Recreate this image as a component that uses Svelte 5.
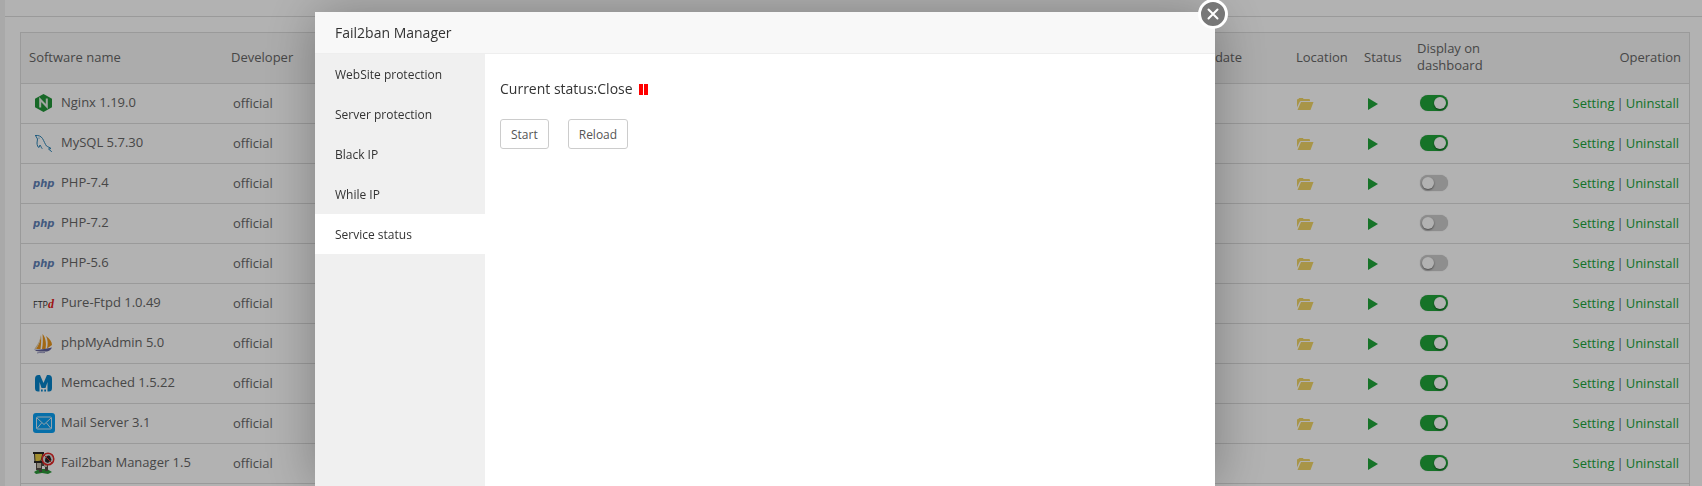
<script lang="ts">
  type Software = { name: string; icon: string; shown: boolean };

  let software: Software[] = $state([
    { name: "Nginx 1.19.0", icon: "nginx", shown: true },
    { name: "MySQL 5.7.30", icon: "mysql", shown: true },
    { name: "PHP-7.4", icon: "php", shown: false },
    { name: "PHP-7.2", icon: "php", shown: false },
    { name: "PHP-5.6", icon: "php", shown: false },
    { name: "Pure-Ftpd 1.0.49", icon: "ftpd", shown: true },
    { name: "phpMyAdmin 5.0", icon: "phpmyadmin", shown: true },
    { name: "Memcached 1.5.22", icon: "memcached", shown: true },
    { name: "Mail Server 3.1", icon: "mail", shown: true },
    { name: "Fail2ban Manager 1.5", icon: "fail2ban", shown: true },
  ]);

  const tabs = ["WebSite protection", "Server protection", "Black IP", "While IP", "Service status"];
  let active = $state("Service status");
</script>

{#snippet logo(icon: string)}
  <svg class="logo" width="22" height="24" viewBox="0 0 22 24" aria-hidden="true">
    {#if icon === "nginx"}
      <path fill="#219639" d="M10.5 3 19 7.700V16.300L10.500 21 2 16.300V7.700z" />
      <path fill="none" stroke="#e4efe6" stroke-width="2" d="M7.200 16.500V8.500L13.800 15.500V7.500" />
    {:else if icon === "mysql"}
      <g fill="none" stroke="#2c83b5" stroke-width="1" stroke-linecap="round" stroke-linejoin="round">
        <path d="M2.500 4.500C5 4 8 5 9.500 7.500C11 10 12 13 13.500 15C15 16 17 16.500 18 17.500L15.500 18L18.500 20.500" />
        <path d="M2.500 4.500L4.500 8L4 12C4 14 5 16.500 6 16.500L7 14C8 15 8 16.500 9 17.500" />
      </g>
      <circle cx="6" cy="7" r="0.600" fill="#2c83b5" />
    {:else if icon === "php"}
      <text class="php" x="0" y="16">php</text>
    {:else if icon === "ftpd"}
      <text class="ftp" x="0" y="17">FTP</text>
      <text class="ftp-d" x="15" y="17">d</text>
    {:else if icon === "phpmyadmin"}
      <path fill="#e8961e" d="M8 4C8.500 9 8 14 7.500 18H3C6 14 7.500 9 8 4zM9.500 3C13 7 13.500 13 12.500 18H9C10 13 10 8 9.500 3zM13 5C17 8 19 11 19 14L14 17.500C15 13 15 9 13 5z" />
      <path fill="#dfc9a4" d="M8 4C7 9 5 13 2 17L1.500 18H3C6 14 7.500 9 8 4z" />
      <path fill="#62629b" d="M1 18.500C6 19.500 12 18 19 16.500C18 19 16 20 14 20.500H7C4 20.500 2.500 19.500 1 18.500z" />
      <path fill="none" stroke="#9a9ac0" d="M4 22C7 21 9 22 12 21.500" />
    {:else if icon === "memcached"}
      <path fill="#0783c9" d="M2 8Q2 4 5.500 4H7L10.500 12L14 4H15.500Q19 4 19 8V17Q19 20.500 16 20.500H14.500V11L12.500 17H8.500L6.500 11V20.500H5Q2 20.500 2 17z" />
      <path fill="#0783c9" d="M8 18.500H9.700V20.500H8zM11.300 18.500H13V20.500H11.300z" />
    {:else if icon === "mail"}
      <rect width="22" height="20" y="2" rx="3" fill="#0aa0f2" />
      <g fill="none" stroke="#d5e9f6" stroke-width="1">
        <rect x="3.500" y="6" width="15" height="12" rx="1" />
        <path d="M4 7L11 13.500L18 7M4 17.500L8.500 12M18 17.500L13.500 12" />
      </g>
    {:else}
      <path fill="#2b9838" d="M1 21L6 18H14L19 21L15 23L9 22L3 23z" />
      <path fill="#554d45" d="M3 10H15V20H12V15H9V21H6V19H3z" />
      <path fill="#c8bfae" d="M4 11H8V17H4zM11 12H14V16H11z" />
      <path fill="#e9cc45" stroke="#34302a" d="M1.500 2H10L8 10L2 11z" />
      <path fill="#292725" d="M0 1H11V3H0zM1 10H12V12H1z" />
      <circle cx="15" cy="8" r="5.800" fill="#ddd" stroke="#e22626" stroke-width="1.500" />
      <path fill="#262626" d="M12 10C12 6 14 3.500 17 5L18.500 9L15 12L12.500 11z" />
      <path stroke="#e22626" stroke-width="1" d="M11 4L19 12" />
    {/if}
  </svg>
{/snippet}

<main class="page">
  <div class="topline"></div>
  <div class="panel">
    <table>
      <colgroup>
        <col class="c-name" />
        <col class="c-dev" />
        <col />
        <col class="c-price" />
        <col class="c-expire" />
        <col class="c-location" />
        <col class="c-status" />
        <col class="c-display" />
        <col class="c-operation" />
      </colgroup>
      <thead>
        <tr>
          <th>Software name</th>
          <th>Developer</th>
          <th>Instructions</th>
          <th>Price</th>
          <th class="expire">Expire date</th>
          <th>Location</th>
          <th>Status</th>
          <th>Display on dashboard</th>
          <th class="right">Operation</th>
        </tr>
      </thead>
      <tbody>
        {#each software as item}
          <tr>
            <td>
              <div class="name">
                {@render logo(item.icon)}
                <span>{item.name}</span>
              </div>
            </td>
            <td class="dev">official</td>
            <td></td>
            <td></td>
            <td></td>
            <td>
              <button class="icon-btn" aria-label="Open folder of {item.name}">
                <svg width="18" height="14" viewBox="0 0 18 14" aria-hidden="true">
                  <path fill="#f1d668" d="M1 10.500V3Q1 2 2 2H2.500L3 1H7L7.500 2H13Q14 2 14 3V4H5Q4 4 3.600 5zM5 5H17.500L14.500 13H1.500z" />
                </svg>
              </button>
            </td>
            <td>
              <button class="icon-btn run" aria-label="{item.name} is running">
                <svg width="10" height="12" viewBox="0 0 10 12" aria-hidden="true">
                  <path fill="#20a53a" d="M0 0L10 6L0 12z" />
                </svg>
              </button>
            </td>
            <td>
              <input
                class="switch"
                type="checkbox"
                aria-label="Display {item.name} on dashboard"
                bind:checked={item.shown}
              />
            </td>
            <td class="right ops"><a href="#setting">Setting</a><span>|</span><a href="#uninstall">Uninstall</a></td>
          </tr>
        {/each}
      </tbody>
    </table>
  </div>
</main>

<div class="shade">
  <div class="dialog" role="dialog" aria-labelledby="dialog-title">
    <h1 id="dialog-title">Fail2ban Manager</h1>
    <button class="close" aria-label="Close">
      <svg width="12" height="12" viewBox="0 0 12 12" aria-hidden="true">
        <path stroke="#fff" stroke-width="2" stroke-linecap="round" d="M1.500 1.500L10.500 10.500M10.500 1.500L1.500 10.500" />
      </svg>
    </button>
    <div class="body">
      <nav>
        {#each tabs as tab}
          <button class:active={tab === active} onclick={() => (active = tab)}>{tab}</button>
        {/each}
      </nav>
      <section>
        <p>
          <span>Current status:Close</span>
          <svg width="9" height="11" viewBox="0 0 9 11" aria-hidden="true">
            <path fill="#f00" d="M0 0H4V11H0zM5 0H9V11H5z" />
          </svg>
        </p>
        <div class="actions">
          <button>Start</button>
          <button>Reload</button>
        </div>
      </section>
    </div>
  </div>
</div>

<style>
  :global(body) {
    margin: 0;
    overflow: hidden;
    font-family: "Open Sans", "Noto Sans", sans-serif;
    font-size: 13px;
    color: #666;
  }

  button {
    font: inherit;
    cursor: pointer;
  }

  .page {
    box-sizing: border-box;
    height: 100vh;
    display: flex;
    flex-direction: column;
    border-left: 5px solid #f2f2f2;
    background: #fff;
  }

  .topline {
    height: 16px;
    flex: none;
    border-bottom: 1px solid #ddd;
  }

  .panel {
    flex: 1;
    min-height: 0;
    margin: 15px 12px 0 15px;
    border: 1px solid #ddd;
    border-bottom: 0;
  }

  table {
    width: 100%;
    table-layout: fixed;
    border-collapse: separate;
    border-spacing: 0;
  }

  .c-name { width: 202px; }
  .c-dev { width: 140px; }
  .c-price { width: 90px; }
  .c-expire { width: 126px; }
  .c-location { width: 68px; }
  .c-status { width: 53px; }
  .c-display { width: 100px; }
  .c-operation { width: 180px; }

  th,
  td {
    box-sizing: border-box;
    padding: 0 8px 2px;
    border-bottom: 1px solid #ddd;
    text-align: left;
    font-weight: 400;
    vertical-align: middle;
    white-space: nowrap;
  }

  th {
    height: 51px;
    line-height: 17px;
    background: #f6f6f6;
    white-space: normal;
  }

  td {
    height: 40px;
    line-height: 18px;
  }

  .right {
    text-align: right;
  }

  th.expire {
    padding-right: 46px;
    text-align: right;
    white-space: nowrap;
  }

  td.dev {
    padding-left: 10px;
  }

  td.ops {
    padding-right: 10px;
  }

  .ops span {
    margin: 0 2px;
  }

  .name {
    display: flex;
    align-items: center;
    gap: 6px;
    padding-left: 4px;
  }

  .name span {
    padding-bottom: 2px;
  }

  .logo {
    flex: none;
  }

  .php {
    font: italic 700 10px "DejaVu Sans", sans-serif;
    fill: #6181b6;
  }

  .ftp {
    font: 9px "Open Sans", sans-serif;
    fill: #333;
  }

  .ftp-d {
    font: italic 700 12px "Liberation Serif", serif;
    fill: #e02020;
  }

  .icon-btn {
    display: flex;
    padding: 2px 0 0;
    border: 0;
    background: none;
  }

  .run {
    padding-left: 4px;
  }

  a {
    color: #20a53a;
    text-decoration: none;
  }

  .switch {
    appearance: none;
    display: block;
    box-sizing: border-box;
    width: 28px;
    height: 16px;
    margin: 0 0 0 3px;
    padding: 2px;
    border-radius: 8px;
    background: #ccc;
    box-shadow: 0 0 1px #bbb;
    cursor: pointer;
  }

  .switch::before {
    content: "";
    display: block;
    width: 12px;
    height: 12px;
    border-radius: 50%;
    background: #fff;
    box-shadow: 0 1px 2px rgba(0, 0, 0, 0.5);
  }

  .switch:checked {
    background: #20a53a;
  }

  .switch:checked::before {
    margin-left: 12px;
  }

  /* The dialog sits in the middle track; the side tracks scale with the window. */
  .shade {
    position: fixed;
    inset: 0;
    display: grid;
    grid-template-columns: 315fr 900fr 487fr;
    padding-top: 12px;
    background: rgba(0, 0, 0, 0.3);
  }

  .dialog {
    grid-column: 2;
    position: relative;
    display: flex;
    flex-direction: column;
    background: #fff;
    box-shadow: 1px 1px 50px rgba(0, 0, 0, 0.3);
    color: #333;
  }

  h1 {
    margin: 0;
    padding: 0 20px;
    border-bottom: 1px solid #eee;
    background: #f8f8f8;
    font-size: 14px;
    font-weight: 400;
    line-height: 41px;
  }

  .close {
    position: absolute;
    top: -13px;
    right: -13px;
    display: flex;
    align-items: center;
    justify-content: center;
    box-sizing: border-box;
    width: 30px;
    height: 30px;
    padding: 0;
    border: 3px solid #fff;
    border-radius: 50%;
    background: #777;
  }

  .body {
    flex: 1;
    display: flex;
  }

  nav {
    width: 170px;
    flex: none;
    background: #f0f0f0;
  }

  nav button {
    display: block;
    width: 100%;
    height: 40px;
    padding: 0 20px;
    border: 0;
    background: none;
    color: #333;
    font-size: 12px;
    text-align: left;
  }

  nav .active {
    background: #fff;
  }

  section {
    flex: 1;
    padding: 25px 15px;
  }

  p {
    display: flex;
    align-items: center;
    gap: 6px;
    margin: 0 0 20px;
    font-size: 14px;
    line-height: 20px;
  }

  .actions {
    display: flex;
    gap: 19px;
  }

  .actions button {
    height: 30px;
    padding: 0 10px;
    border: 1px solid #ccc;
    border-radius: 3px;
    background: #fff;
    color: #555;
    font-size: 12px;
  }
</style>
